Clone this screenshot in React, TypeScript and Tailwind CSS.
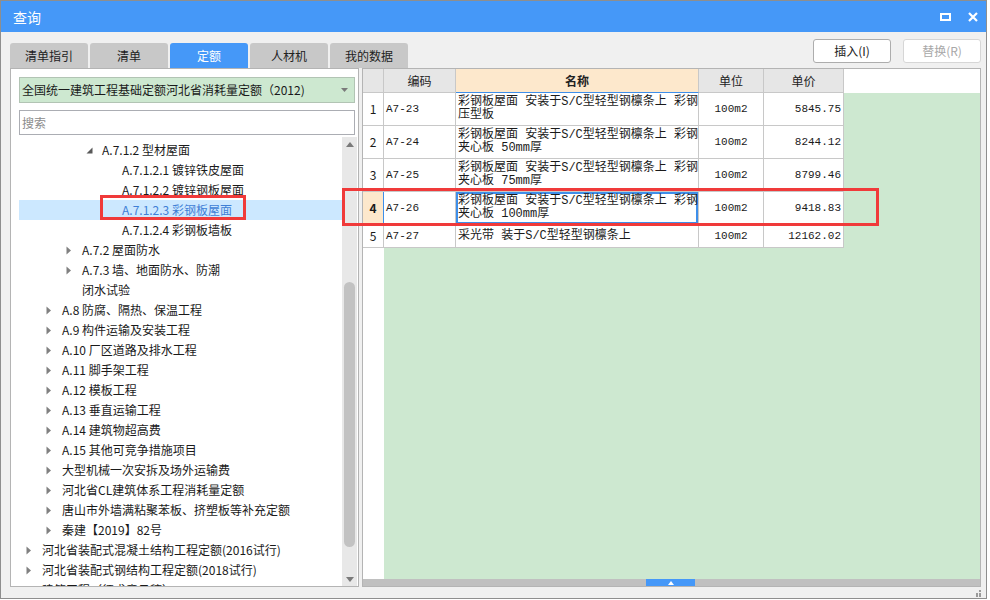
import React from "react";

const tabs = ["清单指引", "清单", "定额", "人材机", "我的数据"];

type Node = { level: number; text: string; icon?: "open" | "closed"; selected?: boolean };

const tree: Node[] = [
  { level: 4, text: "A.7.1.2 型材屋面", icon: "open" },
  { level: 5, text: "A.7.1.2.1 镀锌铁皮屋面" },
  { level: 5, text: "A.7.1.2.2 镀锌钢板屋面" },
  { level: 5, text: "A.7.1.2.3 彩钢板屋面", selected: true },
  { level: 5, text: "A.7.1.2.4 彩钢板墙板" },
  { level: 3, text: "A.7.2 屋面防水", icon: "closed" },
  { level: 3, text: "A.7.3 墙、地面防水、防潮", icon: "closed" },
  { level: 3, text: "闭水试验" },
  { level: 2, text: "A.8 防腐、隔热、保温工程", icon: "closed" },
  { level: 2, text: "A.9 构件运输及安装工程", icon: "closed" },
  { level: 2, text: "A.10 厂区道路及排水工程", icon: "closed" },
  { level: 2, text: "A.11 脚手架工程", icon: "closed" },
  { level: 2, text: "A.12 模板工程", icon: "closed" },
  { level: 2, text: "A.13 垂直运输工程", icon: "closed" },
  { level: 2, text: "A.14 建筑物超高费", icon: "closed" },
  { level: 2, text: "A.15 其他可竞争措施项目", icon: "closed" },
  { level: 2, text: "大型机械一次安拆及场外运输费", icon: "closed" },
  { level: 2, text: "河北省CL建筑体系工程消耗量定额", icon: "closed" },
  { level: 2, text: "唐山市外墙满粘聚苯板、挤塑板等补充定额", icon: "closed" },
  { level: 2, text: "秦建【2019】82号", icon: "closed" },
  { level: 1, text: "河北省装配式混凝土结构工程定额(2016试行)", icon: "closed" },
  { level: 1, text: "河北省装配式钢结构工程定额(2018试行)", icon: "closed" },
  { level: 1, text: "建筑工程（征求意见稿）", icon: "closed" },
];

const indent: Record<number, string> = {
  1: "pl-[7px]",
  2: "pl-[27px]",
  3: "pl-[47px]",
  4: "pl-[67px]",
  5: "pl-[87px]",
};

const rows = [
  { no: "1", code: "A7-23", name: ["彩钢板屋面 安装于S/C型轻型钢檩条上 彩钢", "压型板"], unit: "100m2", price: "5845.75" },
  { no: "2", code: "A7-24", name: ["彩钢板屋面 安装于S/C型轻型钢檩条上 彩钢", "夹心板 50mm厚"], unit: "100m2", price: "8244.12" },
  { no: "3", code: "A7-25", name: ["彩钢板屋面 安装于S/C型轻型钢檩条上 彩钢", "夹心板 75mm厚"], unit: "100m2", price: "8799.46" },
  { no: "4", code: "A7-26", name: ["彩钢板屋面 安装于S/C型轻型钢檩条上 彩钢", "夹心板 100mm厚"], unit: "100m2", price: "9418.83", active: true },
  { no: "5", code: "A7-27", name: ["采光带 装于S/C型轻型钢檩条上"], unit: "100m2", price: "12162.02" },
];

const mono = "font-['Liberation_Mono','Noto_Sans_CJK_SC',monospace]";

function Arrow({ icon }: { icon?: "open" | "closed" }) {
  if (icon === "closed")
    return (
      <svg width="6" height="9" viewBox="0 0 6 9">
        <polygon points="0.5,0.5 5,4.5 0.5,8.5" fill="#808080" />
      </svg>
    );
  if (icon === "open")
    return (
      <svg width="7" height="7" viewBox="0 0 7 7">
        <polygon points="6.5,0.5 6.5,6.5 0.5,6.5" fill="#595959" />
      </svg>
    );
  return null;
}

export default function App() {
  return (
    <div className="relative w-[990px] h-[600px] bg-white font-['Noto_Sans_CJK_SC',sans-serif] text-[#1a1a1a]">
      <div className="w-[987px] h-[599px] border border-[#8e8e8e] flex flex-col bg-[#f0f0f0]">
        {/* title bar */}
        <div className="h-[31px] bg-[#4598f8] flex items-center justify-between pl-[12px] pr-[8px]">
          <span className="text-white text-[14px] leading-none">查询</span>
          <div className="flex items-center gap-[17px]">
            <svg width="11" height="8" viewBox="0 0 11 8">
              <rect x="1" y="1" width="9" height="6" fill="none" stroke="#fff" strokeWidth="2" />
            </svg>
            <svg width="10" height="10" viewBox="0 0 10 10">
              <path d="M1 1L9 9M9 1L1 9" stroke="#fff" strokeWidth="2.2" />
            </svg>
          </div>
        </div>

        <div className="flex-1 flex flex-col pl-[9px] pr-[5px]">
          {/* tabs + buttons */}
          <div className="h-[36px] flex justify-between">
            <div className="flex gap-[2px] mt-[11px]">
              {tabs.map((t) => (
                <div
                  key={t}
                  className={
                    t === "定额"
                      ? "w-[78px] h-[25px] rounded-t-[3px] bg-[#4598f8] text-white text-[12px] flex items-center justify-center"
                      : "w-[78px] h-[25px] rounded-t-[3px] bg-[#c8c8c8] text-[#222] text-[12px] flex items-center justify-center"
                  }
                >
                  {t}
                </div>
              ))}
            </div>
            <div className="flex gap-[12px] mt-[7px]">
              <div className="w-[78px] h-[24px] rounded-[3px] border border-[#adadad] bg-white text-[12px] flex items-center justify-center text-[#222]">
                插入(I)
              </div>
              <div className="w-[78px] h-[24px] rounded-[3px] border border-[#d6d6d6] bg-white text-[12px] flex items-center justify-center text-[#a8a8a8]">
                替换(R)
              </div>
            </div>
          </div>

          {/* main */}
          <div className="h-[519px] flex gap-[3px]">
            {/* left panel */}
            <div className="w-[349px] border border-[#b4b4b4] bg-white flex flex-col pl-2 pr-[1px] pt-2">
              <div className="mr-[2px] h-[26px] bg-[#cde8d0] border border-[#b2c4b4] flex items-center justify-between pl-[2px] pr-[6px]">
                <span className="text-[12px]">全国统一建筑工程基础定额河北省消耗量定额（2012)</span>
                <svg width="7" height="4" viewBox="0 0 7 4">
                  <polygon points="0,0 7,0 3.5,4" fill="#7a7a7a" />
                </svg>
              </div>
              <div className="mr-[2px] mt-[7px] h-[25px] border border-[#abadb3] flex items-center pl-[2px]">
                <span className="text-[12px] text-[#8c8c8c]">搜索</span>
              </div>
              <div className="mt-[2px] flex-1 flex min-h-0">
                <div className="flex-1 overflow-hidden pt-[3px]">
                  {tree.map((n) => (
                    <div
                      key={n.text}
                      className={`h-[20px] flex items-center ${indent[n.level]} ${n.selected ? "bg-[#cce8ff]" : ""}`}
                    >
                      <div className="w-[16px] h-[20px] flex items-center">
                        <Arrow icon={n.icon} />
                      </div>
                      <span className={`text-[12px] whitespace-nowrap ${n.selected ? "text-[#3f7fd6]" : ""}`}>
                        {n.text}
                      </span>
                    </div>
                  ))}
                </div>
                <div className="w-[15px] bg-[#e8e8e8] flex flex-col items-center pt-[5px] pb-[4px]">
                  <svg width="8" height="5" viewBox="0 0 8 5">
                    <polygon points="0,5 8,5 4,0" fill="#7a7a7a" />
                  </svg>
                  <div className="mt-[135px] w-[11px] h-[265px] rounded-full bg-[#c2c2c2]" />
                  <div className="flex-1" />
                  <svg width="8" height="5" viewBox="0 0 8 5">
                    <polygon points="0,0 8,0 4,5" fill="#7a7a7a" />
                  </svg>
                </div>
              </div>
            </div>

            {/* table panel */}
            <div className="w-[619px] border border-[#b4b4b4] bg-[#cde8d0] flex flex-col">
              <div className="h-[24px] flex text-[12px] text-[#222]">
                <div className="w-[21px] bg-[#e6e6e6] border-r border-b border-[#c8c8c8]" />
                <div className="w-[72px] bg-[#e6e6e6] border-r border-b border-[#c8c8c8] flex items-center justify-center">编码</div>
                <div className="w-[243px] bg-[#fde8cc] border-r border-[#c8c8c8] border-b border-b-[#3e8fea] flex items-center justify-center font-bold">名称</div>
                <div className="w-[65px] bg-[#e6e6e6] border-r border-b border-[#c8c8c8] flex items-center justify-center">单位</div>
                <div className="w-[80px] bg-[#e6e6e6] border-r border-b border-[#c8c8c8] flex items-center justify-center">单价</div>
                <div className="flex-1 bg-white" />
              </div>
              {rows.map((r) => (
                <div key={r.no} className={`flex ${r.no === "5" ? "h-[23px]" : "h-[33px]"}`}>
                  <div
                    className={
                      r.active
                        ? "w-[21px] bg-[#fde8cc] border-r border-r-[#3e8fea] border-b border-b-[#c8c8c8] flex items-center justify-center text-[12px] font-bold"
                        : "w-[21px] bg-white border-r border-b border-[#c8c8c8] flex items-center justify-center text-[12px]"
                    }
                  >
                    {r.no}
                  </div>
                  <div className={`w-[72px] bg-white border-r border-b border-[#c8c8c8] flex items-center pl-[2px] text-[11px] ${mono}`}>
                    {r.code}
                  </div>
                  <div
                    className={`w-[243px] bg-white border-r border-b border-[#c8c8c8] pl-[2px] text-[12px] leading-[13px] whitespace-nowrap overflow-hidden ${mono} ${
                      r.name.length > 1 ? "pt-[3px]" : "flex items-center"
                    } ${r.active ? "shadow-[inset_0_0_0_2px_#3e8fea]" : ""}`}
                  >
                    {r.name.map((l) => (
                      <div key={l}>{l}</div>
                    ))}
                  </div>
                  <div className={`w-[65px] bg-white border-r border-b border-[#c8c8c8] flex items-center justify-center text-[11px] ${mono}`}>
                    {r.unit}
                  </div>
                  <div className={`w-[80px] bg-white border-r border-b border-[#c8c8c8] flex items-center justify-end pr-[2px] text-[11px] ${mono}`}>
                    {r.price}
                  </div>
                </div>
              ))}
              <div className="flex-1 flex">
                <div className="w-[21px] bg-white" />
              </div>
              <div className="h-[7px] bg-[#c0c0c0] flex">
                <div className="ml-[283px] w-[49px] bg-[#4598f8] flex items-center justify-center">
                  <svg width="6" height="4" viewBox="0 0 6 4">
                    <polygon points="0,4 6,4 3,0" fill="#fff" />
                  </svg>
                </div>
              </div>
            </div>
          </div>
          <div className="flex-1 flex justify-end items-end pb-[1px]">
            <svg width="7" height="7" viewBox="0 0 7 7">
              <rect x="5" y="0" width="2" height="2" fill="#9a9a9a" />
              <rect x="2" y="3" width="2" height="2" fill="#9a9a9a" />
              <rect x="5" y="3" width="2" height="2" fill="#9a9a9a" />
              <rect x="5" y="5" width="2" height="2" fill="#9a9a9a" />
              <rect x="2" y="5" width="2" height="2" fill="#9a9a9a" />
            </svg>
          </div>
        </div>
      </div>

      {/* red annotation boxes */}
      <div className="absolute left-[100px] top-[195px] w-[146px] h-[25px] border-[3px] border-[#f03a3a]" />
      <div className="absolute left-[342px] top-[188px] w-[537px] h-[38px] border-[3px] border-[#f03a3a]" />
    </div>
  );
}
